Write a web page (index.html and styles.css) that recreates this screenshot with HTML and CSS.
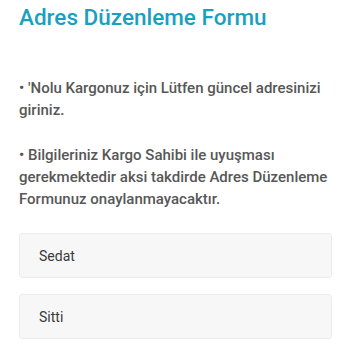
FILE: index.html
```html
<!DOCTYPE html>
<html lang="tr">
<head>
  <meta charset="UTF-8">
  <meta name="viewport" content="width=device-width, initial-scale=1.0">
  <title>Adres Düzenleme Formu</title>
  <link rel="stylesheet" href="styles.css">
</head>
<body>

<div class="container">
  <h1 class="title">Adres Düzenleme Formu</h1>

  <p class="info">• 'Nolu Kargonuz için Lütfen güncel adresinizi giriniz.</p>
  <p class="info">• Bilgileriniz Kargo Sahibi ile uyuşması gerekmektedir aksi takdirde Adres Düzenleme Formunuz onaylanmayacaktır.</p>

  <form class="form">
    <input class="field" type="text" value="Sedat">
    <input class="field" type="text" value="Sitti">
  </form>
</div>

</body>
</html>
```

FILE: styles.css
```css
body {
  font-family: Roboto, "Noto Sans", Arial, sans-serif;
  margin: 0;
  padding: 0;
  background: #ffffff;
}

.container {
  padding: 3px 18px 0 19px;
}

.title {
  color: #1a9fc0;
  font-size: 22.5px;
  font-weight: 500;
  margin: 0 0 46px 0;
  line-height: 28px;
}

.info {
  color: #575757;
  font-size: 15px;
  font-weight: 500;
  line-height: 22px;
  margin: 0 0 23px 0;
}

.form {
  display: flex;
  flex-direction: column;
  gap: 16px;
  margin-top: 17px;
}

.field {
  height: 45px;
  box-sizing: border-box;
  padding: 0 19px;
  background: #f7f7f7;
  border: 1px solid #ececec;
  border-radius: 3px;
  font-family: inherit;
  font-size: 14px;
  font-weight: 400;
  color: #3a3a3a;
}
```
